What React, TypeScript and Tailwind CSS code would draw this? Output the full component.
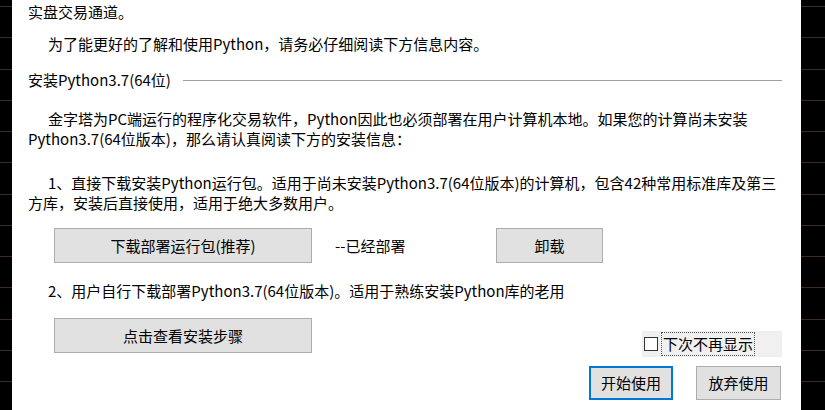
import React from 'react'

const font = { fontFamily: '"Noto Sans CJK SC", "Noto Sans", sans-serif' }

function Strip({ width }: { width: string }) {
  return (
    <div className={`${width} h-full bg-black flex flex-col pt-[6px] shrink-0`}>
      {Array.from({ length: 13 }).map((_, i) => (
        <div key={i} className="h-[31.25px] border-t border-[#3d2a1e] shrink-0" />
      ))}
    </div>
  )
}

function WinButton({ label, className }: { label: string; className: string }) {
  return (
    <button
      className={`bg-[#e1e1e1] border border-[#adadad] text-black text-[15px] leading-[20px] flex items-center justify-center shrink-0 ${className}`}
    >
      {label}
    </button>
  )
}

export default function App() {
  return (
    <div className="w-[825px] h-[410px] flex bg-white overflow-hidden" style={font}>
      <Strip width="w-[12px]" />

      <div className="flex-1 flex flex-col pl-[16px] pr-[19px] pt-[2px] text-[15px] leading-[20px] text-black">
        <p>实盘交易通道。</p>
        <p className="mt-[12px] indent-[20px]">为了能更好的了解和使用Python，请务必仔细阅读下方信息内容。</p>

        {/* section title with rule */}
        <div className="mt-[16px] flex items-center gap-[12px]">
          <span>安装Python3.7(64位)</span>
          <div className="flex-1 border-t border-[#a0a0a0]" />
        </div>

        <p className="mt-[19px] indent-[20px]">
          金字塔为PC端运行的程序化交易软件，Python因此也必须部署在用户计算机本地。如果您的计算尚未安装Python3.7(64位版本)，那么请认真阅读下方的安装信息：
        </p>

        <p className="mt-[24px] indent-[20px]">
          1、直接下载安装Python运行包。适用于尚未安装Python3.7(64位版本)的计算机，包含42种常用标准库及第三方库，安装后直接使用，适用于绝大多数用户。
        </p>

        <div className="mt-[15px] flex items-center pl-[26px]">
          <WinButton label="下载部署运行包(推荐)" className="w-[258px] h-[35px]" />
          <span className="ml-[23px] w-[161px]">--已经部署</span>
          <WinButton label="卸载" className="w-[107px] h-[35px]" />
        </div>

        <p className="mt-[18px] indent-[20px]">2、用户自行下载部署Python3.7(64位版本)。适用于熟练安装Python库的老用</p>

        <div className="mt-[17px] flex items-start justify-between pl-[26px]">
          <WinButton label="点击查看安装步骤" className="w-[258px] h-[35px]" />
          <div className="mt-[13px] w-[140px] h-[26px] bg-[#f0f0f0] flex items-center pl-[2px] gap-[3px]">
            <span className="w-[14px] h-[14px] border border-[#333333] bg-white shrink-0" />
            <span className="border border-dotted border-[#555555] h-[24px] px-px flex items-center">下次不再显示</span>
          </div>
        </div>

        <div className="mt-[9px] flex justify-end gap-[23px]">
          <WinButton label="开始使用" className="w-[84px] h-[34px] !border-2 !border-[#0078d7]" />
          <WinButton label="放弃使用" className="w-[85px] h-[34px] mr-px" />
        </div>
      </div>

      <Strip width="w-[24px]" />
    </div>
  )
}
